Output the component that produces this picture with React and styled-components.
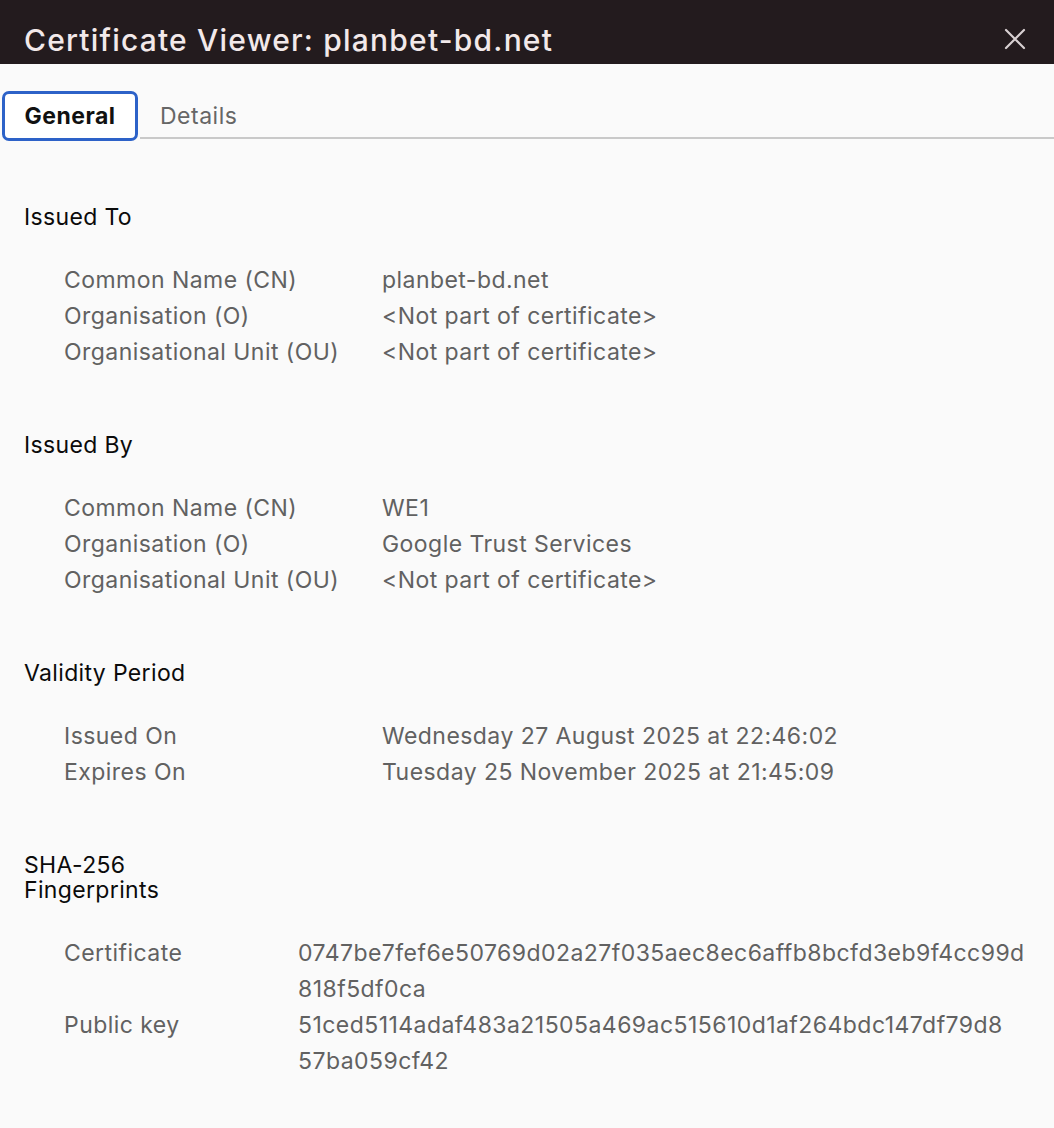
import styled, { createGlobalStyle } from "styled-components";

const GlobalStyle = createGlobalStyle`
	html, body {
		margin: 0;
		padding: 0;
		background: #fafafa;
	}
	body {
		font-family: Inter, "Liberation Sans", sans-serif;
		-webkit-font-smoothing: antialiased;
	}
`;

const Page = styled.div`
	width: 1054px;
	min-height: 1128px;
	background: #fafafa;
`;

const TitleBar = styled.header`
	height: 64px;
	background: #231b1e;
	display: flex;
	align-items: center;
	justify-content: space-between;
	padding: 16px 24px 0 24px;
	box-sizing: border-box;
`;

const Title = styled.h1`
	margin: 0;
	font-size: 30px;
	font-weight: 500;
	color: #f2e9ea;
	letter-spacing: 1.2px;
	line-height: 36px;
`;

const CloseButton = styled.button`
	border: 0;
	background: none;
	padding: 0;
	width: 24px;
	height: 24px;
	display: flex;
	align-items: center;
	justify-content: center;
	margin-top: -2px;
	margin-right: 3px;
	cursor: pointer;
`;

const TabList = styled.div`
	display: flex;
	align-items: flex-end;
	margin-top: 27px;
	padding-left: 2px;
`;

const ActiveTab = styled.div`
	height: 50px;
	width: 136px;
	box-sizing: border-box;
	border: 3px solid #2d62c8;
	border-radius: 7px;
	background: #fff;
	display: flex;
	align-items: center;
	justify-content: center;
	font-size: 23px;
	letter-spacing: 0.5px;
	font-weight: 700;
	color: #111;
`;

const TabRest = styled.div`
	flex: 1;
	height: 46px;
	margin: 0 0 2px 2px;
	border-bottom: 2px solid #c9c9c9;
	display: flex;
	align-items: center;
	box-sizing: border-box;
	padding: 2px 0 0 20px;
`;

const Tab = styled.span`
	font-size: 23px;
	letter-spacing: 0.5px;
	color: #666;
`;

const Content = styled.main`
	padding: 64px 24px 40px 24px;
	display: flex;
	flex-direction: column;
	gap: 63px;
`;

const Section = styled.section`
	display: flex;
	flex-direction: column;
	gap: 32px;
`;

const SectionTitle = styled.h2`
	margin: 0;
	font-size: 23px;
	letter-spacing: 0.35px;
	font-weight: 400;
	line-height: 25px;
	color: #0b0b0b;
`;

const Fields = styled.dl`
	margin: 0;
	padding-left: 40px;
	display: grid;
	grid-template-columns: ${(p) => p.$labelWidth}px 1fr;
	line-height: 36px;
	font-size: 23px;
	letter-spacing: 0.45px;
	color: #616161;
`;

const Label = styled.dt`
	margin: 0;
`;

const Value = styled.dd`
	margin: 0;
	white-space: nowrap;
`;

const HashLine = styled.span`
	display: block;
`;

const sections = [
	{
		title: "Issued To",
		rows: [
			["Common Name (CN)", "planbet-bd.net"],
			["Organisation (O)", "<Not part of certificate>"],
			["Organisational Unit (OU)", "<Not part of certificate>"],
		],
	},
	{
		title: "Issued By",
		rows: [
			["Common Name (CN)", "WE1"],
			["Organisation (O)", "Google Trust Services"],
			["Organisational Unit (OU)", "<Not part of certificate>"],
		],
	},
	{
		title: "Validity Period",
		rows: [
			["Issued On", "Wednesday 27 August 2025 at 22:46:02"],
			["Expires On", "Tuesday 25 November 2025 at 21:45:09"],
		],
	},
];

const fingerprints = [
	["Certificate", ["0747be7fef6e50769d02a27f035aec8ec6affb8bcfd3eb9f4cc99d", "818f5df0ca"]],
	["Public key", ["51ced5114adaf483a21505a469ac515610d1af264bdc147df79d8", "57ba059cf42"]],
];

function CloseIcon() {
	return (
		<svg width="22" height="22" viewBox="0 0 22 22">
			<path d="M2 2 L20 20 M20 2 L2 20" stroke="#d8d0d2" strokeWidth="2.2" strokeLinecap="round" />
		</svg>
	);
}

export default function App() {
	return (
		<Page>
			<GlobalStyle />
			<TitleBar>
				<Title>Certificate Viewer: planbet-bd.net</Title>
				<CloseButton aria-label="Close">
					<CloseIcon />
				</CloseButton>
			</TitleBar>

			<TabList>
				<ActiveTab>General</ActiveTab>
				<TabRest>
					<Tab>Details</Tab>
				</TabRest>
			</TabList>

			<Content>
				{sections.map((s) => (
					<Section key={s.title}>
						<SectionTitle>{s.title}</SectionTitle>
						<Fields $labelWidth={318}>
							{s.rows.map(([label, value]) => [
								<Label key={label + "l"}>{label}</Label>,
								<Value key={label + "v"}>{value}</Value>,
							])}
						</Fields>
					</Section>
				))}

				<Section>
					<SectionTitle>
						SHA-256
						<br />
						Fingerprints
					</SectionTitle>
					<Fields $labelWidth={234}>
						{fingerprints.map(([label, lines]) => [
							<Label key={label + "l"}>{label}</Label>,
							<Value key={label + "v"}>
								{lines.map((l) => (
									<HashLine key={l}>{l}</HashLine>
								))}
							</Value>,
						])}
					</Fields>
				</Section>
			</Content>
		</Page>
	);
}
